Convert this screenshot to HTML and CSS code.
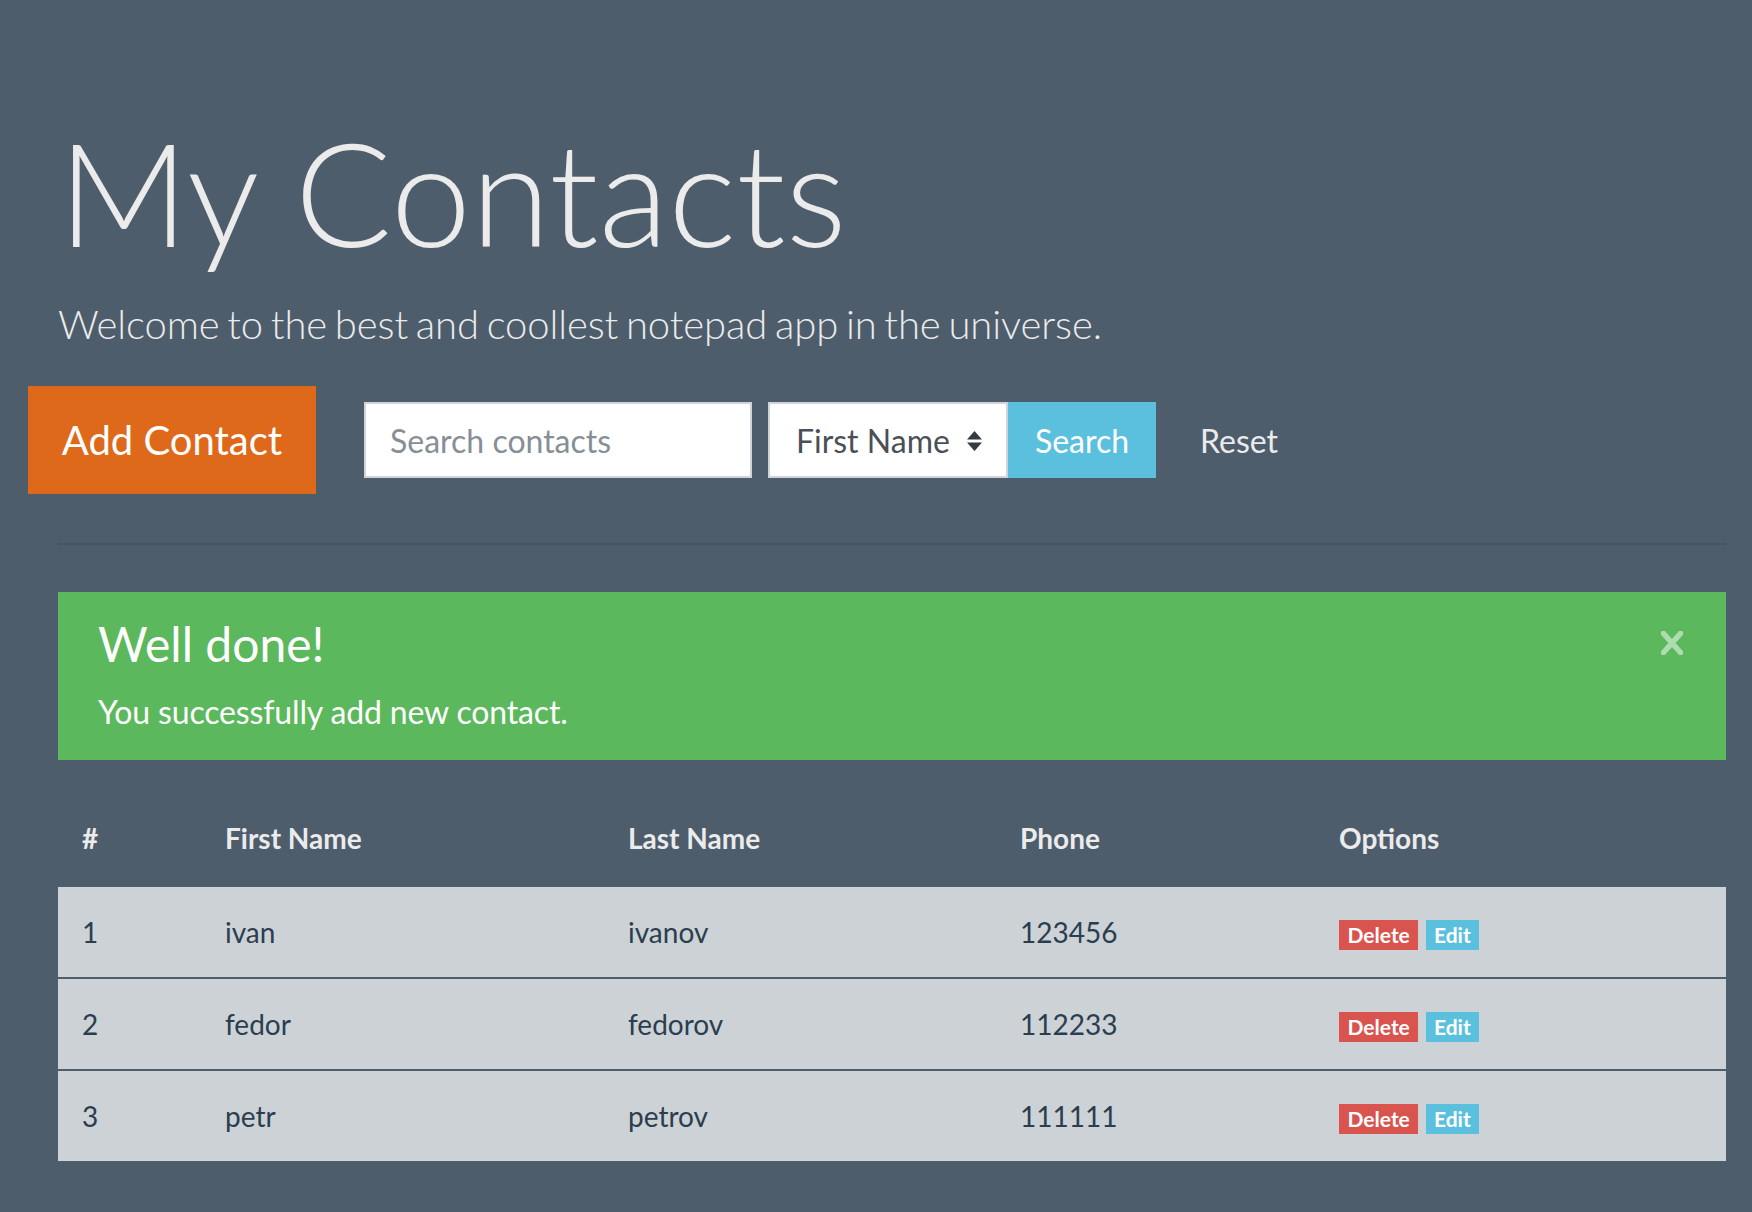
FILE: index.html
```html
<!DOCTYPE html>
<html lang="en">
<head>
<meta charset="utf-8">
<title>My Contacts</title>
<link rel="stylesheet" href="styles.css">
</head>
<body>
<div class="page">
  <header class="hero">
    <h1 class="title">My Contacts</h1>
    <p class="lead">Welcome to the best and coollest notepad app in the universe.</p>
  </header>

  <div class="toolbar">
    <button class="btn-add" type="button">Add Contact</button>
    <form class="search">
      <input class="search-input" type="text" placeholder="Search contacts">
      <div class="select">
        <span>First Name</span>
        <svg class="select-arrow" width="15" height="20" viewBox="0 0 15 20"><path d="M0 8.5 L7.5 0 L15 8.5 Z M0 11.5 L15 11.5 L7.5 20 Z" fill="#343a40"/></svg>
      </div>
      <button class="btn-search" type="button">Search</button>
    </form>
    <button class="btn-reset" type="button">Reset</button>
  </div>

  <hr class="divider">

  <div class="alert">
    <h4 class="alert-heading">Well done!</h4>
    <p class="alert-text">You successfully add new contact.</p>
    <button class="alert-close" type="button" aria-label="Close">
      <svg width="22" height="24" viewBox="0 0 22 24"><path d="M2.5 2.5 L19.5 21.5 M19.5 2.5 L2.5 21.5" stroke="#aedcae" stroke-width="5.5" stroke-linecap="square"/></svg>
    </button>
  </div>

  <table class="contacts">
    <colgroup>
      <col class="c-num"><col class="c-first"><col class="c-last"><col class="c-phone"><col class="c-opt">
    </colgroup>
    <thead>
      <tr><th>#</th><th>First Name</th><th>Last Name</th><th>Phone</th><th>Options</th></tr>
    </thead>
    <tbody>
      <tr><td>1</td><td>ivan</td><td>ivanov</td><td>123456</td><td><span class="badge badge-danger">Delete</span> <span class="badge badge-info">Edit</span></td></tr>
      <tr><td>2</td><td>fedor</td><td>fedorov</td><td>112233</td><td><span class="badge badge-danger">Delete</span> <span class="badge badge-info">Edit</span></td></tr>
      <tr><td>3</td><td>petr</td><td>petrov</td><td>111111</td><td><span class="badge badge-danger">Delete</span> <span class="badge badge-info">Edit</span></td></tr>
    </tbody>
  </table>
</div>
</body>
</html>
```

FILE: styles.css
```css
html, body {
  margin: 0;
  padding: 0;
  background: #4e5d6c;
}
body {
  font-family: Lato, "Liberation Sans", sans-serif;
  color: #ebebeb;
  min-height: 1212px;
}
.page {
  padding: 0 26px 40px 58px;
}
.title {
  margin: 105px 0 16px;
  font-size: 144px;
  line-height: 173px;
  font-weight: 300;
  color: #ebebeb;
}
.lead {
  margin: 0 0 32px;
  font-size: 40px;
  line-height: 60px;
  font-weight: 300;
  color: #ebebeb;
  word-spacing: -3px;
  letter-spacing: -0.1px;
}
.toolbar {
  display: flex;
  align-items: center;
  margin-left: -30px;
  height: 108px;
}
.btn-add {
  width: 288px;
  height: 108px;
  border: none;
  background: #df691a;
  color: #fff;
  font-family: inherit;
  font-size: 40px;
  padding: 0;
}
.search {
  display: flex;
  align-items: center;
  margin: 0 0 0 48px;
}
.search-input {
  box-sizing: border-box;
  width: 388px;
  height: 76px;
  border: 2px solid #ced4da;
  padding: 0 24px;
  font-family: inherit;
  font-size: 32px;
  color: #495057;
  background: #fff;
  outline: none;
}
.search-input::placeholder {
  color: #868e96;
}
.select {
  box-sizing: border-box;
  margin-left: 16px;
  width: 240px;
  height: 76px;
  border: 2px solid #ced4da;
  background: #fff;
  display: flex;
  align-items: center;
  padding-left: 26px;
  font-size: 32px;
  color: #495057;
}
.select-arrow {
  margin-left: 17px;
  margin-top: 2px;
}
.btn-search {
  width: 148px;
  height: 76px;
  border: none;
  background: #5bc0de;
  color: #fff;
  font-family: inherit;
  font-size: 32px;
  padding: 0;
}
.btn-reset {
  margin-left: 44px;
  border: none;
  background: none;
  padding: 0;
  color: #ebebeb;
  font-family: inherit;
  font-size: 32px;
}
.divider {
  margin: 49px 0 0;
  border: 0;
  border-top: 2px solid rgba(0, 0, 0, 0.1);
  height: 0;
}
.alert {
  position: relative;
  margin-top: 47px;
  background: #5cb85c;
  color: #fff;
  padding: 24px 40px;
}
.alert-heading {
  margin: 0 0 16px;
  font-size: 48px;
  line-height: 56px;
  font-weight: 400;
}
.alert-text {
  margin: 0;
  font-size: 32px;
  line-height: 48px;
  letter-spacing: -0.15px;
}
.alert-close {
  position: absolute;
  top: 39px;
  right: 43px;
  border: none;
  background: none;
  padding: 0;
  width: 22px;
  height: 24px;
  display: block;
}
.alert-close svg {
  display: block;
}
.contacts {
  margin-top: 33px;
  width: 100%;
  border-collapse: collapse;
  table-layout: fixed;
  font-size: 28px;
  line-height: 42px;
}
.c-num { width: 143px; }
.c-first { width: 403px; }
.c-last { width: 392px; }
.c-phone { width: 319px; }
.c-opt { width: 411px; }
.contacts th {
  text-align: left;
  font-weight: 700;
  color: #ebebeb;
  padding: 24px 24px 28px;
}
.contacts td {
  background: #cdd2d6;
  color: #2b3e50;
  padding: 24px;
}
.contacts tbody tr + tr td {
  border-top: 2px solid #4e5d6c;
}
.badge {
  display: inline-block;
  font-size: 21px;
  line-height: 21px;
  font-weight: 700;
  padding: 4.5px 8.5px;
  color: #fff;
}
.badge-danger {
  background: #d9534f;
}
.badge-info {
  background: #5bc0de;
}
```
